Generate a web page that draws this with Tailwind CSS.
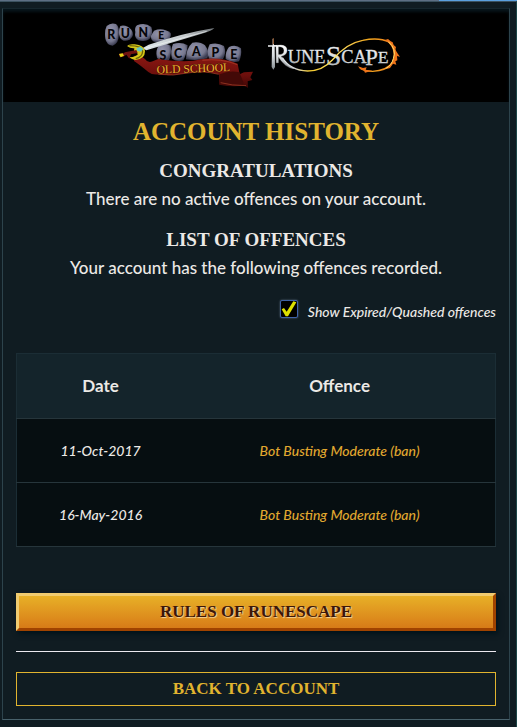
<!DOCTYPE html>
<html lang="en">
<head>
  <meta charset="UTF-8" />
  <meta name="viewport" content="width=device-width, initial-scale=1" />
  <title>Account History - RuneScape</title>
  <script src="https://cdn.jsdelivr.net/npm/@tailwindcss/browser@4"></script>
</head>
<body class="min-h-screen bg-[#101c22] font-['Lato',sans-serif] text-[#ece9e6]">
  <!-- strip of the page artwork above the frame -->
  <div class="h-px bg-linear-to-r from-[#5d6f84] from-85% to-[#5aa0e0] to-85%"></div>

  <div class="border-t border-r border-t-[#3c5260] border-r-[#1c4648] pt-1.5 pr-1.5 pb-[7px] pl-0.5">
    <main class="border border-t-[#16262d] border-x-[#2d434c] border-b-[#48616b]">
      <header class="flex h-[93px] items-center justify-center gap-3 bg-black shadow-[inset_0_3px_3px_#07141a]">
        <a href="#" aria-label="Old School RuneScape">
          <svg class="h-[70px] w-[150px]" viewBox="45 30 450 210">
            <defs>
              <radialGradient id="stone" cx="40%" cy="35%" r="65%">
                <stop offset="0" stop-color="#9495ad" />
                <stop offset="0.7" stop-color="#77788f" />
                <stop offset="1" stop-color="#3c3d52" />
              </radialGradient>
              <linearGradient id="ribbon" x1="0" y1="0" x2="0" y2="1">
                <stop offset="0" stop-color="#8a1712" />
                <stop offset="0.6" stop-color="#6d0f0c" />
                <stop offset="1" stop-color="#3c0705" />
              </linearGradient>
              <linearGradient id="blade" x1="0" y1="0" x2="1" y2="0">
                <stop offset="0" stop-color="#dce5e8" />
                <stop offset="0.6" stop-color="#c4c9cc" />
                <stop offset="1" stop-color="#6d7276" />
              </linearGradient>
            </defs>
            <g fill="url(#stone)">
              <path d="M50 45Q62 34 78 39Q89 46 86 75Q86 97 68 104Q49 101 46 83Q43 58 50 45Z" />
              <path d="M91 45Q108 40 124 56Q136 72 119 86Q99 95 90 80Q83 62 91 45Z" />
              <path d="M141 43Q165 33 184 48Q190 65 181 81Q169 94 145 88Q132 80 136 63Q133 50 141 43Z" />
              <path d="M192 59Q218 48 242 66Q246 80 230 88Q212 96 192 92Q182 87 183 74Z" />
              <path d="M208 101Q226 95 242 104Q246 126 237 147Q216 153 201 141Q195 118 208 101Z" />
              <path d="M249 99Q274 92 293 103Q291 128 280 148Q260 153 246 143Q240 119 249 99Z" />
              <path d="M307 95Q330 91 345 103Q361 124 352 142Q322 150 288 145Q288 112 307 95Z" />
              <path d="M359 100Q382 93 402 105Q410 125 399 144Q376 153 357 143Q348 122 359 100Z" />
              <path d="M417 108Q437 99 453 112Q456 133 447 151Q423 157 407 144Q405 122 417 108Z" />
            </g>
            <g class="font-['Lato',sans-serif] font-black" font-size="37" fill="#060609" text-anchor="middle">
              <text x="64" y="85">R</text>
              <text x="106" y="80">U</text>
              <text x="160" y="78">N</text>
              <text x="214" y="84" font-size="31">E</text>
              <text x="219" y="146">S</text>
              <text x="264" y="142">C</text>
              <text x="319" y="136">A</text>
              <text x="376" y="137">P</text>
              <text x="431" y="144">E</text>
            </g>
            <path d="M132 135Q150 130 165 144Q174 158 188 151L205 144Q290 157 333 145Q390 137 443 158L449 190L462 184L489 182L481 199L487 207L473 211L474 231L462 223Q430 229 388 221L387 190Q340 178 290 187Q240 196 207 190Q187 193 175 183Q150 162 132 150Z" fill="url(#ribbon)" />
            <path d="M389 190Q420 177 448 184L461 216L452 224Q420 225 388 220Z" fill="#430907" />
            <path d="M392 215Q424 224 468 224M205 190Q250 196 293 186Q340 178 386 190M337 148Q394 141 442 161" fill="none" stroke="#b3442c" stroke-width="2" />
            <path d="M157 112L176 101Q280 66 373 51Q365 60 340 67L169 118Z" fill="url(#blade)" />
            <path d="M165 112L350 61" stroke="#f1f5f6" stroke-width="2" />
            <path d="M111 105Q117 98 134 100Q163 103 165 121Q165 144 137 147Q122 144 118 139Q139 138 144 129L132 120L133 112Q121 113 111 105Z" fill="#d5c718" />
            <path d="M118 104Q156 104 158 121Q157 139 137 143" fill="none" stroke="#6c6508" stroke-width="4" />
            <path d="M139 112L151 107L160 114L153 122L142 120Z" fill="#67c5be" />
            <path d="M87 128L101 127L105 124L139 117L143 126L123 130L118 143L109 131L100 137L89 137Z" fill="#701410" />
            <path d="M87 129L98 127L102 134L92 139Z" fill="#e5d519" />
            <g transform="rotate(-2 311 174)">
              <text x="310" y="184" class="font-['Liberation_Serif',serif]" font-size="35" text-anchor="middle" fill="#f0b830" stroke="#3d1004" stroke-width="2" paint-order="stroke">OLD SCHOOL</text>
            </g>
          </svg>
        </a>
        <a href="#" aria-label="RuneScape">
          <svg class="h-10 w-[140px]" viewBox="36 30 420 120">
            <defs>
              <linearGradient id="silver" x1="0" y1="0" x2="0" y2="1">
                <stop offset="0" stop-color="#ffffff" />
                <stop offset="0.55" stop-color="#d8dcdf" />
                <stop offset="1" stop-color="#858c92" />
              </linearGradient>
              <linearGradient id="fire" gradientUnits="userSpaceOnUse" x1="70" y1="0" x2="430" y2="0">
                <stop offset="0" stop-color="#e8ebed" />
                <stop offset="0.14" stop-color="#cfd2d4" />
                <stop offset="0.26" stop-color="#f3c92d" />
                <stop offset="0.48" stop-color="#ffe467" />
                <stop offset="0.75" stop-color="#efa61e" />
                <stop offset="1" stop-color="#f7781a" />
              </linearGradient>
            </defs>
            <!-- sword as the stem of the R -->
            <path d="M53 39H57V57H66V62H59L60 123L55 131L50 123L51 62H39V58H53Z" fill="url(#silver)" />
            <path d="M53 37H57V55H53Z" fill="#8d5a35" />
            <g class="font-['Liberation_Serif',serif]" fill="url(#silver)" stroke="#d8dcdf" stroke-width="1">
              <path d="M63 58Q98 53 96 75Q94 88 78 91Q94 117 117 128Q91 126 69 91V86Q87 87 87 74Q87 61 70 62V110H64Z" />
              <text x="98" y="110" font-size="55">UNE</text>
              <text x="212" y="118" font-size="84">S</text>
              <text x="259" y="110" font-size="55">CA</text>
              <text x="331" y="118" font-size="68">P</text>
              <text x="368" y="110" font-size="53">E</text>
            </g>
            <path d="M82 95Q106 134 158 135Q202 135 232 102Q273 52 323 43Q372 33 402 48Q432 70 414 108Q394 135 353 136Q329 136 315 126" fill="none" stroke="url(#fire)" stroke-width="4" />
            <path d="M390 42L399 39L407 46L413 49L416 57L423 63L421 71L429 84L435 92L426 90L427 103L421 106L424 116L414 113L405 126L394 129L407 114Q419 96 415 79Q413 58 390 42ZM309 121L324 126L335 124L332 131L352 134L330 140L327 134L316 130Z" fill="#ee741a" />
            <path d="M400 47Q426 70 415 98Q410 118 392 128" fill="none" stroke="#ffe16a" stroke-width="3" />
          </svg>
        </a>
      </header>

      <div class="px-[13px] pt-3.5 pb-[13px] text-center">
        <h1 class="font-['Liberation_Serif',serif] text-[25px] leading-8 font-bold text-[#e1b42f] uppercase">Account History</h1>

        <section class="mt-[11px]">
          <h2 class="font-['Liberation_Serif',serif] text-[19px] leading-6 font-bold uppercase">Congratulations</h2>
          <p class="mt-1 text-[17px] leading-6 font-medium">There are no active offences on your account.</p>
        </section>

        <section class="mt-[17px]">
          <h2 class="font-['Liberation_Serif',serif] text-[19px] leading-6 font-bold uppercase">List of Offences</h2>
          <p class="mt-1 text-[17px] leading-6 font-medium">Your account has the following offences recorded.</p>
        </section>

        <div class="mt-5 flex items-start justify-end gap-2.5">
          <span class="relative size-[18px]">
            <input type="checkbox" id="show-expired" checked
              class="block size-[18px] appearance-none rounded-[2px] border border-[#3e62a8] bg-black shadow-[0_0_2px_#5f7184]" />
            <svg class="pointer-events-none absolute inset-0 size-[18px]" viewBox="0 0 54 54">
              <path d="M5 28L12 24L20 35L40 4L49 7L24 49L17 49Z" fill="#dce000" />
            </svg>
          </span>
          <label for="show-expired" class="text-[14px] leading-6 font-medium italic">Show Expired/Quashed offences</label>
        </div>

        <table class="mt-[29px] w-full table-fixed border-collapse border border-[#1b2d35] bg-[#060e11]">
          <thead>
            <tr class="h-[65px] border-b border-[#26353b] bg-[#14242b] text-[17px]">
              <th class="w-[35%] font-bold">Date</th>
              <th class="font-bold">Offence</th>
            </tr>
          </thead>
          <tbody class="text-[14px] font-medium italic">
            <tr class="h-16 border-b border-[#26353b]">
              <td>11-Oct-2017</td>
              <td><a href="#" class="text-[#e1a82f]">Bot Busting Moderate (ban)</a></td>
            </tr>
            <tr class="h-16 border-b border-[#26353b]">
              <td>16-May-2016</td>
              <td><a href="#" class="text-[#e1a82f]">Bot Busting Moderate (ban)</a></td>
            </tr>
          </tbody>
        </table>

        <a href="#" class="mt-[46px] block border-3 border-t-[#f0cb70] border-r-[#a04300] border-b-[#a04300] border-l-[#f0cb70] bg-linear-to-b from-[#e7b027] to-[#d77b18] font-['Liberation_Serif',serif] text-[17px] leading-8 font-bold text-[#3c1709] uppercase shadow-[2px_3px_5px_#02131a] text-shadow-[1px_1px_1px_#f5d7a0]">Rules of RuneScape</a>

        <hr class="mt-5 border-t border-[#ece9f0]" />

        <a href="#" class="mt-5 block border border-[#e1b42f] font-['Liberation_Serif',serif] text-[17px] leading-8 font-bold text-[#e1b42f] uppercase">Back to Account</a>
      </div>
    </main>
  </div>
</body>
</html>
